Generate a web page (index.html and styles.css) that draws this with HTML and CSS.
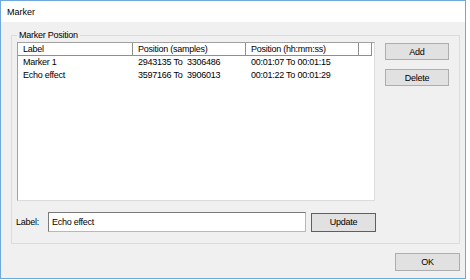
FILE: index.html
```html
<!DOCTYPE html>
<html lang="en">
<head>
    <meta charset="UTF-8">
    <title>Marker</title>
    <link rel="stylesheet" href="styles.css">
</head>
<body>
    <div class="window">
        <div class="titlebar">Marker</div>
        <div class="client">
            <div class="group">
                <span class="group-caption">Marker Position</span>
                <div class="group-top">
                    <div class="listview">
                        <div class="lv-head">Label</div>
                        <div class="lv-head">Position (samples)</div>
                        <div class="lv-head">Position (hh:mm:ss)</div>
                        <div class="lv-head"></div>

                        <div class="lv-cell">Marker 1</div>
                        <div class="lv-cell">2943135 To  3306486</div>
                        <div class="lv-cell">00:01:07 To 00:01:15</div>
                        <div class="lv-cell"></div>

                        <div class="lv-cell">Echo effect</div>
                        <div class="lv-cell">3597166 To  3906013</div>
                        <div class="lv-cell">00:01:22 To 00:01:29</div>
                        <div class="lv-cell"></div>
                    </div>
                    <div class="side-buttons">
                        <button class="btn">Add</button>
                        <button class="btn">Delete</button>
                    </div>
                </div>
                <div class="label-row">
                    <span class="field-label">Label:</span>
                    <input class="textbox" type="text" value="Echo effect">
                    <button class="btn btn-update">Update</button>
                </div>
            </div>
            <div class="footer">
                <button class="btn btn-ok">OK</button>
            </div>
        </div>
    </div>
</body>
</html>
```

FILE: styles.css
```css
body {
    margin: 0;
    background: #fff;
    font-family: "Liberation Sans", Arial, sans-serif;
    font-size: 9px;
    color: #000;
}
.window {
    width: 466px;
    height: 279px;
    box-sizing: border-box;
    border: 1px solid #6fa8dc;
    display: flex;
    flex-direction: column;
}
.titlebar {
    height: 21px;
    line-height: 22px;
    padding-left: 6px;
    background: #fff;
}
.client {
    flex: 1;
    background: #f0f0f0;
    padding: 13px 5px 0 10px;
    letter-spacing: -0.25px;
}
.group {
    position: relative;
    height: 209px;
    box-sizing: border-box;
    border: 1px solid #dcdcdc;
    padding: 6px 0 0 5px;
}
.group-caption {
    position: absolute;
    top: -6px;
    left: 5px;
    padding: 0 2px;
    line-height: 11px;
    background: #f0f0f0;
}
.group-top {
    display: flex;
    gap: 10px;
}
.listview {
    width: 358px;
    height: 159px;
    box-sizing: border-box;
    border: 1px solid #a0a0a0;
    border-right-color: #dcdcdc;
    border-bottom-color: #dcdcdc;
    background: #fff;
    display: grid;
    grid-template-columns: 115px 113px 113px 13px;
    grid-auto-rows: 13px;
    align-content: start;
}
.lv-head {
    height: 13px;
    line-height: 12px;
    padding-left: 5px;
    box-sizing: border-box;
    border-right: 1px solid #8f8f8f;
    border-bottom: 1px solid #8f8f8f;
    margin-bottom: 0;
}
.lv-cell {
    line-height: 13px;
    padding-left: 5px;
    white-space: pre;
}
.listview .lv-cell:nth-of-type(5),
.listview .lv-cell:nth-of-type(6),
.listview .lv-cell:nth-of-type(7),
.listview .lv-cell:nth-of-type(8) {
    margin-top: 0;
}
.side-buttons {
    display: flex;
    flex-direction: column;
    gap: 9px;
    padding-top: 1px;
}
.btn {
    width: 64px;
    height: 17px;
    padding: 0;
    font-family: inherit;
    font-size: 9px;
    letter-spacing: -0.25px;
    color: #000;
    background: #e1e1e1;
    border: 1px solid #adadad;
}
.label-row {
    display: flex;
    align-items: center;
    margin-top: 11px;
    margin-left: -1px;
}
.field-label {
    width: 32px;
}
.textbox {
    width: 258px;
    height: 20px;
    box-sizing: border-box;
    margin: 0;
    padding: 0 3px;
    font-family: inherit;
    font-size: 9px;
    letter-spacing: -0.25px;
    border: 1px solid #7a7a7a;
    border-right-color: #b8b8b8;
    border-bottom-color: #b8b8b8;
    background: #fff;
}
.btn-update {
    width: 65px;
    height: 19px;
    margin-left: 5px;
    border: 1px solid #0078d7;
}
.footer {
    display: flex;
    justify-content: flex-end;
    padding-top: 9px;
}
.btn-ok {
    width: 65px;
    height: 18px;
}
```
